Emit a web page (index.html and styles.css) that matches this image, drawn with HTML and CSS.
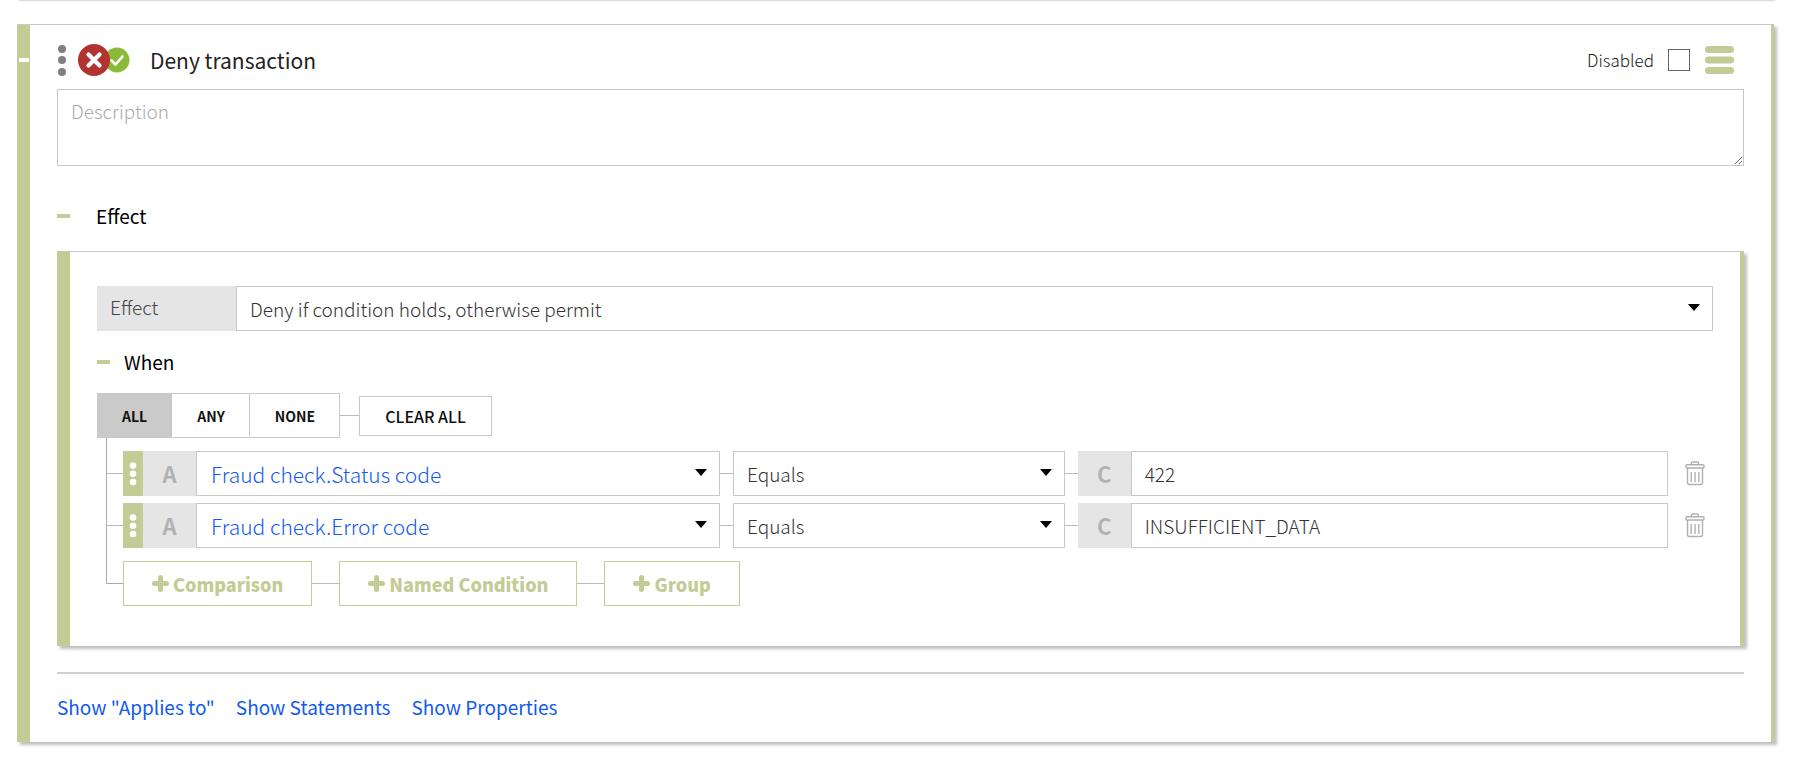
FILE: index.html
```html
<!DOCTYPE html>
<html lang="en">
  <head>
    <meta charset="UTF-8" />
    <meta name="viewport" content="width=device-width, initial-scale=1" />
    <title>Deny transaction</title>
    <link rel="stylesheet" href="styles.css">
  </head>
  <body>
    <div class="previous-rule"></div>

    <main class="rule">
      <button class="rule-toggle" aria-label="Collapse rule"><span class="dash dash-light"></span></button>

      <div class="rule-body">
        <header class="rule-header">
          <svg class="drag-dots" width="10" height="32" viewBox="0 0 10 32" fill="#808080">
            <circle cx="5" cy="5" r="4" />
            <circle cx="5" cy="16" r="4" />
            <circle cx="5" cy="28" r="4" />
          </svg>
          <svg class="effect-icon" width="52" height="32" viewBox="0 0 52 32">
            <circle cx="39" cy="16" r="12.5" fill="#8aba38" />
            <path d="M33.5 16.5l4 4 7-8" fill="none" stroke="#fff" stroke-width="2.6" stroke-linecap="round" stroke-linejoin="round" />
            <circle cx="16" cy="16" r="16" fill="#b23430" />
            <path d="M10.5 10.5l11 11M21.5 10.5l-11 11" fill="none" stroke="#fff" stroke-width="4.2" stroke-linecap="round" />
          </svg>
          <h1>Deny transaction</h1>
          <label class="disabled-label" for="disabled">Disabled</label>
          <input type="checkbox" id="disabled" class="disabled-check" />
          <button class="menu-btn" aria-label="Rule menu">
            <svg width="30" height="28" viewBox="0 0 30 28" fill="#c2cc94">
              <rect x="0" y="0" width="29" height="7" rx="3.5" />
              <rect x="0" y="10.5" width="29" height="7" rx="3.5" />
              <rect x="0" y="21" width="29" height="7" rx="3.5" />
            </svg>
          </button>
        </header>

        <textarea class="description" placeholder="Description" aria-label="Description"></textarea>

        <div class="section-title">
          <span class="dash"></span>
          <h2>Effect</h2>
        </div>

        <section class="effect-panel">
          <div class="effect-row">
            <label for="effect">Effect</label>
            <select id="effect" class="select effect-select">
              <option>Deny if condition holds, otherwise permit</option>
            </select>
          </div>

          <div class="when-title">
            <span class="dash"></span>
            <h3>When</h3>
          </div>

          <div class="match-row">
            <div class="match-group">
              <button class="active">ALL</button>
              <button>ANY</button>
              <button>NONE</button>
            </div>
            <span class="line line-match"></span>
            <button class="clear-btn">CLEAR ALL</button>
          </div>

          <!-- Condition tree -->
          <div class="tree">
            <div class="tree-row tree-row-first">
              <span class="branch"></span>
              <div class="condition">
                <div class="attribute">
                  <span class="handle">
                    <svg width="8" height="26" viewBox="0 0 8 26" fill="#fff">
                      <circle cx="4" cy="4.5" r="3.3" />
                      <circle cx="4" cy="12.7" r="3.3" />
                      <circle cx="4" cy="21" r="3.3" />
                    </svg>
                  </span>
                  <label class="type" for="attribute1">A</label>
                  <select id="attribute1" class="select attribute-select">
                    <option>Fraud check.Status code</option>
                  </select>
                </div>
                <span class="line"></span>
                <select class="select" aria-label="Comparator">
                  <option>Equals</option>
                </select>
                <span class="line"></span>
                <div class="constant">
                  <label class="type" for="value1">C</label>
                  <input type="text" id="value1" value="422" />
                </div>
                <button class="delete-btn" aria-label="Delete condition">
                  <svg width="20" height="26" viewBox="0 0 20 26" fill="none" stroke="#b0b0b0" stroke-width="1.4">
                    <path d="M6.5 3.5V2q0-1 1-1h5q1 0 1 1v1.5" />
                    <rect x="1" y="3.7" width="18" height="3.3" rx="1" />
                    <path d="M2.5 7v14.5q0 2 2 2h11q2 0 2-2V7M6.2 11v10M10 11v10M13.8 11v10" />
                  </svg>
                </button>
              </div>
            </div>

            <div class="tree-row">
              <span class="branch"></span>
              <div class="condition">
                <div class="attribute">
                  <span class="handle">
                    <svg width="8" height="26" viewBox="0 0 8 26" fill="#fff">
                      <circle cx="4" cy="4.5" r="3.3" />
                      <circle cx="4" cy="12.7" r="3.3" />
                      <circle cx="4" cy="21" r="3.3" />
                    </svg>
                  </span>
                  <label class="type" for="attribute2">A</label>
                  <select id="attribute2" class="select attribute-select">
                    <option>Fraud check.Error code</option>
                  </select>
                </div>
                <span class="line"></span>
                <select class="select" aria-label="Comparator">
                  <option>Equals</option>
                </select>
                <span class="line"></span>
                <div class="constant">
                  <label class="type" for="value2">C</label>
                  <input type="text" id="value2" value="INSUFFICIENT_DATA" />
                </div>
                <button class="delete-btn" aria-label="Delete condition">
                  <svg width="20" height="26" viewBox="0 0 20 26" fill="none" stroke="#b0b0b0" stroke-width="1.4">
                    <path d="M6.5 3.5V2q0-1 1-1h5q1 0 1 1v1.5" />
                    <rect x="1" y="3.7" width="18" height="3.3" rx="1" />
                    <path d="M2.5 7v14.5q0 2 2 2h11q2 0 2-2V7M6.2 11v10M10 11v10M13.8 11v10" />
                  </svg>
                </button>
              </div>
            </div>

            <div class="tree-row tree-row-last">
              <span class="branch"></span>
              <div class="add-row">
                <button class="add-btn">
                  <svg width="17" height="17" viewBox="0 0 17 17"><path d="M8.5 2.5v12M2.5 8.5h12" stroke="#c2cc94" stroke-width="5" stroke-linecap="round" /></svg>
                  Comparison
                </button>
                <span class="line"></span>
                <button class="add-btn">
                  <svg width="17" height="17" viewBox="0 0 17 17"><path d="M8.5 2.5v12M2.5 8.5h12" stroke="#c2cc94" stroke-width="5" stroke-linecap="round" /></svg>
                  Named Condition
                </button>
                <span class="line"></span>
                <button class="add-btn">
                  <svg width="17" height="17" viewBox="0 0 17 17"><path d="M8.5 2.5v12M2.5 8.5h12" stroke="#c2cc94" stroke-width="5" stroke-linecap="round" /></svg>
                  Group
                </button>
              </div>
            </div>
          </div>
        </section>

        <footer class="rule-links">
          <a href="#applies-to">Show "Applies to"</a>
          <a href="#statements">Show Statements</a>
          <a href="#properties">Show Properties</a>
        </footer>
      </div>
    </main>
  </body>
</html>
```
FILE: styles.css
```css
:root {
  --green: #c2cc94;
  --border: #c8c8c8;
  --gray: #e5e5e5;
  --link: #1259f0;
  --control: 45px;
}

* {
  margin: 0;
  padding: 0;
  box-sizing: border-box;
  font-family: 'Noto Sans CJK JP', 'Noto Sans', sans-serif;
}

body {
  background-color: #fff;
  color: #222;
  font-size: 19px;
  line-height: 24px;
}

button {
  background: none;
  border: none;
  cursor: pointer;
}

svg {
  display: block;
}

/* Bottom edge of the rule above */
.previous-rule {
  height: 1px;
  margin: 0 26px 23px 19px;
  background-color: #ddd;
  box-shadow: 2px 0 2px rgba(0, 0, 0, 0.15);
}

.rule {
  display: flex;
  margin: 0 26px 20px 17px;
  border-top: 1px solid var(--border);
  border-right: 3px solid var(--green);
  box-shadow: 3px 3px 3px rgba(0, 0, 0, 0.25);
}

.rule-toggle {
  display: flex;
  justify-content: center;
  width: 13px;
  padding-top: 33px;
  background-color: var(--green);
}

.dash {
  width: 13px;
  height: 4px;
  background-color: var(--green);
}

.dash-light {
  width: 10px;
  background-color: #fff;
}

.rule-body {
  flex: 1;
  padding: 19px 27px 23px;
}

.rule-header {
  display: flex;
  align-items: center;
  height: 32px;
  margin-bottom: 13px;
}

.effect-icon {
  margin: 0 20px 0 11px;
}

h1 {
  flex: 1;
  font-size: 21px;
  font-weight: 400;
}

.disabled-label {
  font-size: 17px;
  font-weight: 300;
}

.disabled-check {
  appearance: none;
  width: 22px;
  height: 22px;
  margin: 0 15px 0 14px;
  border: 1px solid #666;
}

.disabled-check:checked {
  background-color: var(--green);
}

.menu-btn {
  margin-right: 9px;
}

.description {
  display: block;
  width: 100%;
  height: 77px;
  padding: 8px 13px;
  border: 1px solid var(--border);
  font-size: 19px;
  font-weight: 300;
  line-height: 26px;
  resize: vertical;
}

.description::placeholder {
  color: #aaa;
}

.section-title,
.when-title {
  display: flex;
  align-items: center;
  color: #000;
}

.section-title {
  gap: 26px;
  padding: 38px 0 23px;
}

.when-title {
  gap: 14px;
  padding: 19px 0;
}

h2,
h3 {
  font-size: 19px;
  font-weight: 400;
}

.effect-panel {
  padding: 34px 27px 40px;
  border-top: 1px solid var(--border);
  border-left: 13px solid var(--green);
  border-right: 4px solid var(--green);
  box-shadow: 3px 3px 3px rgba(0, 0, 0, 0.25);
}

.effect-row {
  display: flex;
}

.effect-row label {
  width: 139px;
  padding: 9px 13px;
  background-color: var(--gray);
  color: #444;
  font-weight: 300;
}

.select {
  appearance: none;
  min-width: 0;
  height: var(--control);
  padding: 0 40px 0 13px;
  border: 1px solid var(--border);
  border-radius: 0;
  background: #fff url("data:image/svg+xml,%3Csvg xmlns='http://www.w3.org/2000/svg' width='12' height='7'%3E%3Cpath d='M0 0h12l-6 7z'/%3E%3C/svg%3E") no-repeat right 12px top 17px;
  color: #333;
  font-size: 19px;
  font-weight: 300;
}

.effect-select {
  flex: 1;
}

.match-row {
  display: flex;
  align-items: center;
}

.match-group {
  display: flex;
  height: var(--control);
}

.match-group button {
  padding: 0 24px;
  border: 1px solid var(--border);
  color: #111;
  font-size: 14px;
  font-weight: 700;
}

.match-group button + button {
  border-left-color: transparent;
}

.match-group .active {
  background-color: #cacaca;
}

.line {
  align-self: center;
  height: 1px;
  background-color: #bbb;
}

.line-match {
  width: 19px;
}

.clear-btn {
  height: 40px;
  padding: 0 25px;
  border: 1px solid var(--border);
  color: #111;
  font-size: 16px;
  font-weight: 500;
}

.tree {
  padding-left: 9px;
}

.tree-row {
  display: flex;
}

/* Vertical trunk with a tick at the middle of the row's control */
.branch {
  width: 17px;
  border-left: 1px solid #aaa;
  background: linear-gradient(#bbb, #bbb) no-repeat 0 calc(100% - 22px) / 100% 1px;
}

.tree-row-last .branch {
  height: 36px;
  border-bottom: 1px solid #aaa;
  background: none;
}

.condition {
  display: grid;
  grid-template-columns: 180fr 13px 100fr 13px 178fr 45px;
  flex: 1;
  padding-top: 7px;
}

.condition .line {
  width: 100%;
}

.tree-row-first .condition,
.add-row {
  padding-top: 13px;
}

.attribute,
.constant {
  display: flex;
  min-width: 0;
}

.handle {
  display: flex;
  align-items: center;
  justify-content: center;
  width: 20px;
  background-color: var(--green);
}

.type {
  width: 53px;
  background-color: var(--gray);
  color: #b2b2b2;
  font-size: 22px;
  font-weight: 700;
  line-height: var(--control);
  text-align: center;
}

.attribute-select {
  flex: 1;
  padding-left: 14px;
  color: var(--link);
  font-size: 21px;
}

.constant input {
  flex: 1;
  min-width: 0;
  height: var(--control);
  padding: 0 13px;
  border: 1px solid var(--border);
  color: #333;
  font-size: 19px;
  font-weight: 300;
}

.delete-btn {
  display: flex;
  align-items: center;
  padding-left: 17px;
}

.add-row {
  display: flex;
}

.add-row .line {
  width: 27px;
}

.add-btn {
  display: flex;
  align-items: center;
  gap: 4px;
  height: var(--control);
  padding: 0 28px;
  border: 1px solid var(--green);
  color: var(--green);
  font-size: 18px;
  font-weight: 900;
}

.rule-links {
  display: flex;
  gap: 21px;
  margin-top: 26px;
  padding-top: 21px;
  border-top: 2px solid #d0d0d0;
}

.rule-links a {
  color: var(--link);
  text-decoration: none;
}
```
